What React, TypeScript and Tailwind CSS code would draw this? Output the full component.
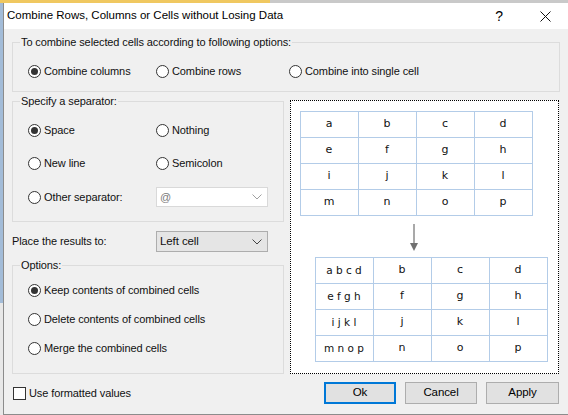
import React from "react";

function Radio({ checked, label }: { checked?: boolean; label: string }) {
  return (
    <div className="flex items-center h-[16px]">
      <span className="w-[13px] h-[13px] rounded-full border border-[#333333] bg-white flex items-center justify-center shrink-0">
        {checked && <span className="w-[7px] h-[7px] rounded-full bg-[#333333]" />}
      </span>
      <span className="ml-[3px] whitespace-nowrap">{label}</span>
    </div>
  );
}

function Chevron({ dark }: { dark?: boolean }) {
  return (
    <svg width="10" height="6" viewBox="0 0 10 6" className="shrink-0">
      <path d="M0.5 0.5 L5 5 L9.5 0.5" fill="none" stroke={dark ? "#444" : "#a0a0a0"} strokeWidth="1" />
    </svg>
  );
}

function Table({ data }: { data: string[][] }) {
  return (
    <div className="border-l border-t border-[#b3cce8] w-[233px] flex flex-col font-['DejaVu_Sans',sans-serif] text-[11px] text-[#111] tracking-normal">
      {data.map((row, i) => (
        <div key={i} className="flex">
          {row.map((c, j) => (
            <div
              key={j}
              className="w-[58px] h-[26px] border-r border-b border-[#b3cce8] flex items-center justify-center whitespace-pre"
            >
              {c.includes(" ") ? <span className="text-[10.5px]">{c}</span> : c}
            </div>
          ))}
        </div>
      ))}
    </div>
  );
}

export default function App() {
  const top = [
    ["a", "b", "c", "d"],
    ["e", "f", "g", "h"],
    ["i", "j", "k", "l"],
    ["m", "n", "o", "p"],
  ];
  const bottom = [
    ["a b c d", "b", "c", "d"],
    ["e f g h", "f", "g", "h"],
    ["i j k l", "j", "k", "l"],
    ["m n o p", "n", "o", "p"],
  ];
  return (
    <div className="w-[568px] h-[415px] flex flex-col overflow-hidden bg-[#e6e6e6] font-['Liberation_Sans',Arial,sans-serif] text-[11px] tracking-[-0.1px] text-[#111]">
      <div className="h-[3px] flex shrink-0">
        <div className="w-[270px] bg-[#f0c860]" />
        <div className="flex-1 bg-[#c9c9c9]" />
      </div>
      <div className="flex flex-1 min-h-0">
        <div className="w-[3px] flex flex-col shrink-0">
          <div className="h-[300px] bg-[#a3bcd8]" />
          <div className="flex-1 bg-[#e8e8e8]" />
        </div>
        <div className="flex-1 flex flex-col border-l border-b border-[#8c8c8c] min-w-0">
          {/* Title bar */}
          <div className="h-[26px] bg-white flex items-center pl-[3px] shrink-0">
            <span className="whitespace-nowrap text-[11.5px] tracking-normal text-black">
              Combine Rows, Columns or Cells without Losing Data
            </span>
            <div className="ml-auto flex h-full">
              <div className="w-[46px] flex items-center justify-center text-[14px] text-black">?</div>
              <div className="w-[46px] flex items-center justify-center">
                <svg width="11" height="11" viewBox="0 0 11 11">
                  <path d="M0.5 0.5 L10.5 10.5 M10.5 0.5 L0.5 10.5" stroke="#111" strokeWidth="1" />
                </svg>
              </div>
            </div>
          </div>

          {/* Body */}
          <div className="flex-1 bg-[#f0f0f0] pl-[8px] pr-[9px] pt-[6px] flex flex-col">
            <fieldset className="border border-[#dcdcdc] p-0 m-0 w-[548px]">
              <legend className="ml-[7px] px-[1px] leading-[15px]">
                To combine selected cells according to following options:
              </legend>
              <div className="flex pl-[15px] pt-[13px] pb-[12px]">
                <div className="w-[128px]">
                  <Radio checked label="Combine columns" />
                </div>
                <div className="w-[133px]">
                  <Radio label="Combine rows" />
                </div>
                <div>
                  <Radio label="Combine into single cell" />
                </div>
              </div>
            </fieldset>

            <div className="flex mt-[2px] gap-[6px]">
              {/* Left column */}
              <div className="w-[272px] flex flex-col">
                <fieldset className="border border-[#dcdcdc] p-0 m-0">
                  <legend className="ml-[7px] px-[1px] leading-[15px]">Specify a separator:</legend>
                  <div className="flex flex-col pl-[15px] pt-[11px] pb-[14px]">
                    <div className="flex items-center h-[20px]">
                      <div className="w-[128px]">
                        <Radio checked label="Space" />
                      </div>
                      <Radio label="Nothing" />
                    </div>
                    <div className="flex items-center h-[20px] mt-[13px]">
                      <div className="w-[128px]">
                        <Radio label="New line" />
                      </div>
                      <Radio label="Semicolon" />
                    </div>
                    <div className="flex items-center h-[20px] mt-[14px]">
                      <div className="w-[128px]">
                        <Radio label="Other separator:" />
                      </div>
                      <div className="w-[112px] h-[20px] bg-white border border-[#d9d9d9] flex items-center pl-[3px] pr-[5px]">
                        <span className="text-[#7a7a7a] flex-1">@</span>
                        <Chevron />
                      </div>
                    </div>
                  </div>
                </fieldset>

                <div className="flex items-center h-[21px] mt-[9px]">
                  <span className="w-[144px]">Place the results to:</span>
                  <div className="w-[112px] h-[21px] bg-[#e5e5e5] border border-[#adadad] flex items-center pl-[3px] pr-[5px]">
                    <span className="flex-1 text-[11.5px]">Left cell</span>
                    <Chevron dark />
                  </div>
                </div>

                <fieldset className="border border-[#dcdcdc] p-0 m-0 mt-[6px]">
                  <legend className="ml-[7px] px-[1px] leading-[15px]">Options:</legend>
                  <div className="flex flex-col pl-[15px] pt-[9px] pb-[17px] gap-[13px]">
                    <Radio checked label="Keep contents of combined cells" />
                    <Radio label="Delete contents of combined cells" />
                    <Radio label="Merge the combined cells" />
                  </div>
                </fieldset>
              </div>

              {/* Right preview */}
              <div className="w-[270px] h-[274px] mt-[6px] border border-dotted border-black bg-white flex flex-col">
                <div className="ml-[9px] mt-[10px]">
                  <Table data={top} />
                </div>
                <div className="h-[41px] flex">
                  <svg width="10" height="28" viewBox="0 0 10 28" className="ml-[118px] mt-[8px]">
                    <path d="M5 0 L5 20" stroke="#707070" strokeWidth="1.2" />
                    <path d="M1 19 L9 19 L5 27 Z" fill="#707070" />
                  </svg>
                </div>
                <div className="ml-[24px]">
                  <Table data={bottom} />
                </div>
              </div>
            </div>

            {/* Bottom row */}
            <div className="flex items-center justify-between mt-[8px]">
              <div className="flex items-center ml-[1px]">
                <span className="w-[13px] h-[13px] border border-[#333333] bg-white shrink-0" />
                <span className="ml-[3px]">Use formatted values</span>
              </div>
              <div className="flex gap-[9px]">
                <button className="w-[72px] h-[22px] bg-[#e1e1e1] border-2 border-[#0078d7] text-[11.5px] text-black">
                  Ok
                </button>
                <button className="w-[72px] h-[22px] bg-[#e1e1e1] border border-[#adadad] text-[11.5px] text-black">
                  Cancel
                </button>
                <button className="w-[73px] h-[22px] bg-[#e1e1e1] border border-[#adadad] text-[11.5px] text-black">
                  Apply
                </button>
              </div>
            </div>
          </div>
        </div>
      </div>
    </div>
  );
}
